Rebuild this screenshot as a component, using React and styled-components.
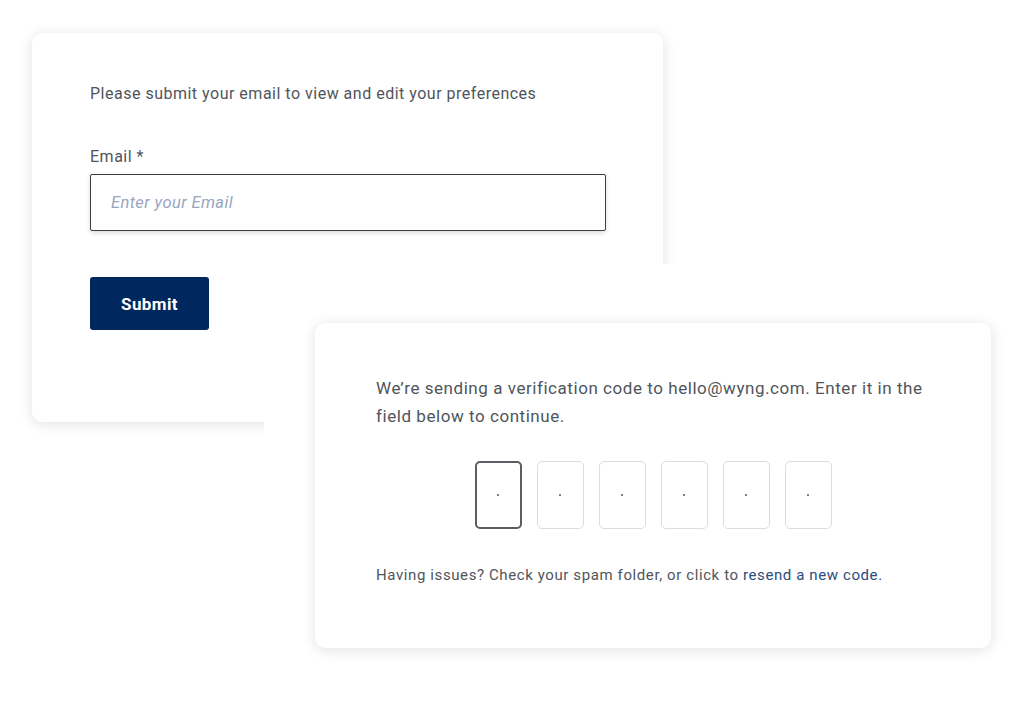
import React from 'react';
import styled, { createGlobalStyle } from 'styled-components';

const GlobalStyle = createGlobalStyle`
  html, body {
    margin: 0;
    background: #ffffff;
    font-family: Roboto, "Noto Sans", sans-serif;
  }
`;

const Canvas = styled.div`
  position: relative;
  width: 1024px;
  height: 702px;
  overflow: hidden;
  background: #fff;
`;

const Card = styled.div`
  background: #fff;
  border-radius: 10px;
  box-shadow: 0 2px 14px rgba(0, 0, 0, 0.12);
  box-sizing: border-box;
`;

const EmailCard = styled(Card)`
  position: absolute;
  left: 32px;
  top: 33px;
  width: 631px;
  height: 389px;
  padding: 49px 58px 0;
  display: flex;
  flex-direction: column;
  align-items: flex-start;
`;

// white sheet that lies over the first card and holds the second one
const Backdrop = styled.div`
  position: absolute;
  left: 264px;
  top: 264px;
  right: 0;
  bottom: 0;
  background: #fff;
  padding: 59px 0 0 51px;
`;

const CodeCard = styled(Card)`
  width: 676px;
  height: 325px;
  padding: 51px 61px 0;
`;

const Intro = styled.p`
  margin: 0;
  font-size: 16px;
  line-height: 24px;
  color: #50555c;
  letter-spacing: 0.5px;
`;

const Label = styled.label`
  margin-top: 39px;
  font-size: 16px;
  line-height: 24px;
  color: #50555c;
  letter-spacing: 0.5px;
`;

const Input = styled.input`
  margin-top: 5px;
  width: 516px;
  height: 57px;
  box-sizing: border-box;
  border: 1.5px solid #3a3e45;
  border-radius: 2px;
  padding: 0 20px;
  font-family: inherit;
  font-size: 16.5px;
  letter-spacing: 0.4px;
  box-shadow: 0 2px 5px rgba(0, 0, 0, 0.14);
  outline: none;

  &::placeholder {
    color: #98a6bf;
    font-style: italic;
  }
`;

const Button = styled.button`
  margin-top: 46px;
  width: 119px;
  height: 53px;
  border: none;
  border-radius: 3px;
  background: #00285e;
  color: #fff;
  font-family: inherit;
  font-size: 17px;
  font-weight: 700;
  letter-spacing: 0.4px;
`;

const Message = styled.p`
  margin: 0;
  font-size: 17px;
  line-height: 28px;
  color: #50555c;
  letter-spacing: 0.55px;
`;

const CodeRow = styled.div`
  display: flex;
  justify-content: center;
  gap: 15px;
  margin-top: 31px;
`;

const CodeBox = styled.div`
  width: 47px;
  height: 68px;
  box-sizing: border-box;
  border-radius: 5px;
  border: ${p => (p.$active ? '2px solid #595d64' : '1px solid #dcdcdc')};
  display: flex;
  align-items: center;
  justify-content: center;
`;

const Dot = styled.span`
  width: 2px;
  height: 2px;
  border-radius: 50%;
  background: #55595f;
`;

const Help = styled.p`
  margin: 36px 0 0;
  font-size: 15px;
  line-height: 20px;
  color: #50555c;
  letter-spacing: 0.6px;
`;

const Resend = styled.a`
  color: #2b4c80;
  text-decoration: none;
`;

export default function App() {
  return (
    <Canvas>
      <GlobalStyle />
      <EmailCard>
        <Intro>Please submit your email to view and edit your preferences</Intro>
        <Label htmlFor="email">Email *</Label>
        <Input id="email" placeholder="Enter your Email" />
        <Button>Submit</Button>
      </EmailCard>
      <Backdrop>
        <CodeCard>
          <Message>
            We’re sending a verification code to hello@wyng.com. Enter it in the
            <br />
            field below to continue.
          </Message>
          <CodeRow>
            {[0, 1, 2, 3, 4, 5].map(i => (
              <CodeBox key={i} $active={i === 0}>
                <Dot />
              </CodeBox>
            ))}
          </CodeRow>
          <Help>
            Having issues? Check your spam folder, or click to{' '}
            <Resend href="#">resend a new code.</Resend>
          </Help>
        </CodeCard>
      </Backdrop>
    </Canvas>
  );
}
